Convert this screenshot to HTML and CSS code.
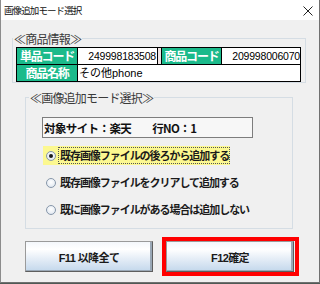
FILE: index.html
```html
<!DOCTYPE html>
<html lang="ja">
<head>
<meta charset="utf-8">
<link rel="stylesheet" href="styles.css">
</head>
<body>
<div class="window">
  <div class="titlebar">
    <span class="title">画像追加モード選択</span>
    <svg class="close" width="10" height="10" viewBox="0 0 10 10"><path d="M0.5 0.5 L9.5 9.5 M9.5 0.5 L0.5 9.5" stroke="#222" stroke-width="1" fill="none"/></svg>
  </div>
  <div class="client">
    <fieldset class="group g1">
      <legend>≪商品情報≫</legend>
      <div class="tbl">
        <div class="row">
          <div class="lbl w1">単品コード</div>
          <div class="val v1 num">249998183508</div>
          <div class="gap"></div>
          <div class="lbl w2">商品コード</div>
          <div class="val v2 num">209998006070</div>
        </div>
        <div class="row r2">
          <div class="lbl w1">商品名称</div>
          <div class="val name">その他phone</div>
        </div>
      </div>
    </fieldset>
    <fieldset class="group g2">
      <legend>≪画像追加モード選択≫</legend>
      <div class="site"><span>対象サイト：楽天</span><span class="lineno">行NO：1</span></div>
      <div class="opts">
        <div class="opt sel"><span class="radio on"></span><span class="otext focus">既存画像ファイルの後ろから追加する</span></div>
        <div class="opt"><span class="radio"></span><span class="otext">既存画像ファイルをクリアして追加する</span></div>
        <div class="opt"><span class="radio"></span><span class="otext">既に画像ファイルがある場合は追加しない</span></div>
      </div>
    </fieldset>
    <div class="buttons">
      <button class="btn">F11 以降全て</button>
      <span class="hl"><button class="btn">F12確定</button></span>
    </div>
  </div>
</div>
</body>
</html>
```
FILE: styles.css
```css
html, body {
  margin: 0;
  padding: 0;
}
body {
  width: 320px;
  height: 284px;
  background: #4f5a55;
  overflow: hidden;
  font-family: "Noto Sans CJK JP", "Liberation Sans", sans-serif;
}
.window {
  width: 318px;
  height: 282px;
  background: #f0f0f0;
  border-left: 1px solid #8c8c8c;
  border-right: 1px solid #707070;
  border-bottom: 1px solid #707070;
  box-sizing: content-box;
  display: flex;
  flex-direction: column;
}
.titlebar {
  height: 20px;
  background: #ffffff;
  display: flex;
  align-items: center;
  justify-content: space-between;
  padding: 0 6px 0 3px;
  flex: none;
}
.title {
  font-size: 9.5px;
  letter-spacing: -0.9px;
  color: #111;
  line-height: 20px;
}
.close {
  display: block;
  margin-top: 1px;
}
.client {
  flex: 1;
  display: flex;
  flex-direction: column;
}
.group {
  border: 1px solid #d5dde4;
  margin: 0;
  min-inline-size: 0;
}
.group legend {
  font-size: 12px;
  line-height: 15px;
  letter-spacing: -0.8px;
  color: #3a3a3a;
  padding: 0 1px;
}
.g1 {
  margin: 11px 13px 0 11px;
  padding: 1px 4px 0 3px;
}
.g1 legend {
  margin-left: -3px;
}
.tbl {
  border: 1px solid #000;
  width: 285px;
  box-sizing: border-box;
  background: #fff;
}
.row {
  display: flex;
  height: 16px;
}
.r2 {
  border-top: 1px solid #000;
}
.lbl {
  background: #1bba8b;
  color: #fff;
  font-size: 12px;
  font-weight: bold;
  letter-spacing: -1.2px;
  line-height: 16px;
  text-align: center;
  border-right: 1px solid #000;
  box-sizing: content-box;
}
.w1 { width: 60px; }
.w2 {
  width: 59px;
  border-left: 1px solid #000;
}
.val {
  color: #000;
  line-height: 16px;
  overflow: hidden;
  white-space: nowrap;
}
.num {
  font-family: "Liberation Sans", sans-serif;
  font-size: 10.5px;
  text-align: right;
  letter-spacing: -0.2px;
}
.v1 {
  width: 79px;
  border-right: 1px solid #000;
  padding-right: 1px;
  box-sizing: border-box;
  width: 80px;
}
.gap {
  width: 3px;
  background: #efe4e4;
}
.v2 {
  width: 78px;
}
.name {
  flex: 1;
  font-size: 11px;
  padding-left: 1px;
}
.name {
  font-family: "Liberation Sans", "Noto Sans CJK JP", sans-serif;
}
.g2 {
  margin: 7px 26px 0 24px;
  padding: 12px 10px 9px 16px;
}
.g2 legend {
  margin-left: -13px;
}
.site {
  width: 211px;
  height: 21px;
  box-sizing: border-box;
  border: 1px solid #7d7d7d;
  background: #f7f7f7;
  display: flex;
  align-items: center;
  font-size: 11.5px;
  font-weight: bold;
  letter-spacing: -0.6px;
  color: #111;
  padding-left: 1px;
}
.lineno {
  margin-left: 21px;
}
.opts {
  margin-top: 8px;
  margin-left: 1px;
  display: flex;
  flex-direction: column;
  align-items: flex-start;
  gap: 8px;
}
.opt {
  height: 19px;
  display: flex;
  align-items: center;
  padding-left: 3px;
}
.opt.sel {
  background: #fcf890;
}
.radio {
  width: 10px;
  height: 10px;
  box-sizing: border-box;
  border-radius: 50%;
  border: 1px solid #8797aa;
  background: radial-gradient(circle at 50% 40%, #ffffff 0%, #e9eef4 60%, #cfdae6 100%);
  display: flex;
  align-items: center;
  justify-content: center;
  flex: none;
}
.radio.on::after {
  content: "";
  width: 4px;
  height: 4px;
  border-radius: 50%;
  background: #1a1a1a;
}
.otext {
  margin-left: 2px;
  border: 1px dotted transparent;
  font-size: 11px;
  font-weight: bold;
  letter-spacing: -1.05px;
  line-height: 15px;
  color: #1a1a1a;
  padding: 0 0 0 1px;
  white-space: nowrap;
}
.otext.focus {
  border-color: #555;
}
.buttons {
  margin: 8px 0 0 24px;
  display: flex;
  align-items: center;
  gap: 9px;
}
.btn {
  width: 128px;
  height: 31px;
  box-sizing: border-box;
  border: 1px solid;
  border-color: #9a9a9a #5e5e5e #5e5e5e #9a9a9a;
  box-shadow: inset -2px -1px 0 #9aa8b6;
  background: linear-gradient(#f4f7fb 0%, #ffffff 25%, #e3ecf6 60%, #c4d8ec 100%);
  font-family: "Liberation Sans", "Noto Sans CJK JP", sans-serif;
  font-size: 11px;
  font-weight: bold;
  color: #1a1a1a;
  letter-spacing: -0.6px;
  padding: 0;
  margin: 0;
  display: block;
}
.hl {
  display: block;
  border: 4px solid #ff0000;
  padding: 0 1px 0 0;
}
```
